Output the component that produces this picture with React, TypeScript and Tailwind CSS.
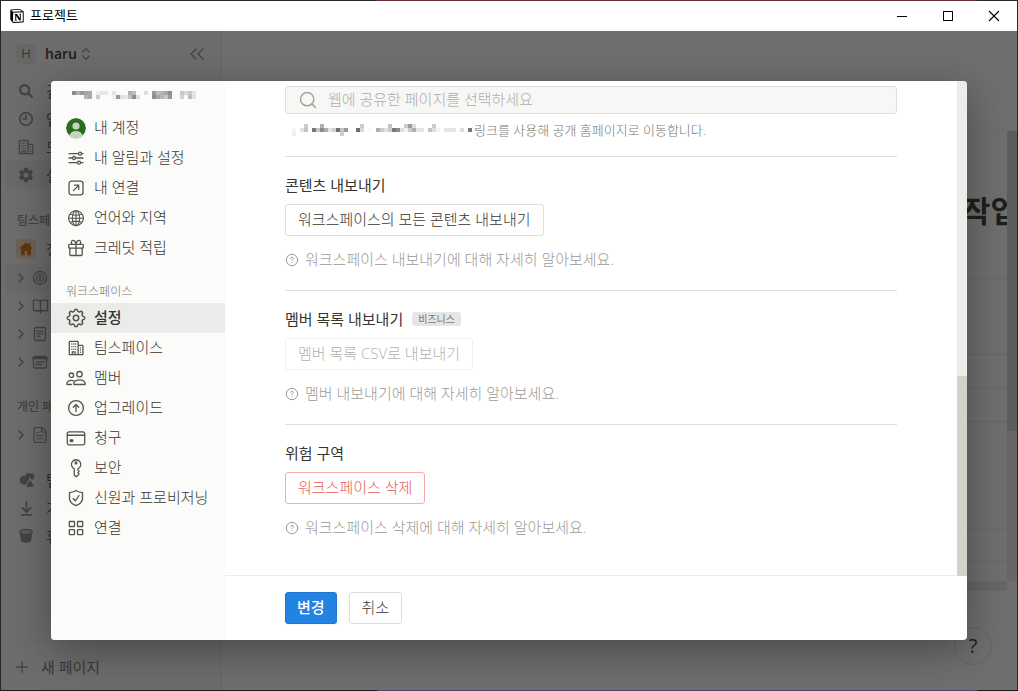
import { useState } from "react";
import type { ReactNode } from "react";
import { ChevronsLeft, ChevronsUpDown, ChevronRight, BookOpen, FileText, Plus, ArrowDownToLine, Search } from "lucide-react";
import { IoSettingsSharp } from "react-icons/io5";
import { FaSearch } from "react-icons/fa";
import { SiNotion } from "react-icons/si";

type Cell = [number, number, string];

// blurred out account address, [column, row, colour] in 4px blocks
const emailCells: Cell[] = [
  [0, 0, "#8c8c8a"], [1, 0, "#aeaeac"], [2, 0, "#9a9a98"], [3, 0, "#a5a5a3"], [4, 0, "#a8a8a6"],
  [3, 1, "#b5b5b3"], [4, 1, "#a8a8a6"], [6, 0, "#eeeeec"], [7, 0, "#e8e8e6"], [8, 0, "#e8e8e6"], [6, 1, "#c8c8c6"],
  [10, 0, "#e6e6e4"], [10, 1, "#eeeeec"], [11, 1, "#999997"], [12, 1, "#dededc"], [13, 1, "#e8e8e6"],
  [14, 0, "#aeaeac"], [15, 0, "#bcbcba"], [14, 1, "#c4c4c2"], [15, 1, "#8f8f8d"], [16, 1, "#dededc"],
  [18, 0, "#dededc"], [20, 0, "#999997"], [20, 1, "#8f8f8d"], [21, 0, "#bcbcba"], [21, 1, "#a5a5a3"],
  [22, 0, "#b5b5b3"], [22, 1, "#b5b5b3"], [23, 0, "#a5a5a3"], [23, 1, "#c8c8c6"], [24, 0, "#8c8c8a"], [24, 1, "#999997"],
  [27, 0, "#c8c8c6"], [27, 1, "#d2d2d0"], [28, 0, "#d8d8d6"], [29, 0, "#c8c8c6"], [29, 1, "#bcbcba"],
  [30, 0, "#e2e2e0"], [30, 1, "#e2e2e0"],
];

const urlCells: Cell[] = [
  [0, 1, "#f5f5f4"], [0, 2, "#f0f0ef"], [2, 1, "#e3e3e2"], [3, 0, "#cdcdcb"], [3, 1, "#c4c4c2"],
  [5, 1, "#777775"], [6, 1, "#c4c4c2"], [7, 0, "#b0b0ae"], [7, 1, "#8c8c8a"], [8, 1, "#aeaeac"],
  [9, 1, "#e3e3e2"], [10, 1, "#d2d2d0"], [11, 1, "#70706e"], [12, 1, "#c4c4c2"], [12, 2, "#cdcdcb"], [13, 1, "#999997"],
  [16, 1, "#70706e"], [17, 0, "#cdcdcb"], [17, 1, "#d8d8d6"], [19, 1, "#f7f7f6"], [21, 1, "#aeaeac"], [22, 1, "#cdcdcb"],
  [23, 1, "#e0e0df"], [24, 0, "#c4c4c2"], [24, 1, "#cdcdcb"], [25, 1, "#777775"], [26, 1, "#8c8c8a"], [27, 1, "#dededc"],
  [28, 0, "#cdcdcb"], [28, 1, "#f0f0ef"], [29, 0, "#999997"], [29, 1, "#cdcdcb"], [30, 0, "#dededc"], [30, 1, "#aeaeac"],
  [31, 1, "#e6e6e4"], [32, 1, "#e6e6e4"], [34, 1, "#c4c4c2"], [35, 0, "#cdcdcb"], [35, 1, "#dededc"], [36, 1, "#f2f2f1"],
  [38, 1, "#e6e6e4"], [39, 1, "#e6e6e4"], [40, 1, "#e6e6e4"], [42, 1, "#dededc"], [44, 1, "#777775"],
];

function Mosaic({ cells, cols, rows }: { cells: Cell[]; cols: number; rows: number }) {
  return (
    <svg width={cols * 4} height={rows * 4} shapeRendering="crispEdges" className="shrink-0" aria-hidden="true">
      {cells.map(([x, y, fill]) => (
        <rect key={`${x}-${y}`} x={x * 4} y={y * 4} width="4" height="4" fill={fill} />
      ))}
    </svg>
  );
}

function Icon({ children }: { children: ReactNode }) {
  return (
    <svg
      width="20"
      height="20"
      viewBox="0 0 20 20"
      fill="none"
      stroke="currentColor"
      strokeWidth="1.3"
      strokeLinecap="round"
      strokeLinejoin="round"
      aria-hidden="true"
    >
      {children}
    </svg>
  );
}

const Avatar = () => (
  <svg width="20" height="20" viewBox="0 0 20 20" className="rounded-full shadow-sm" aria-hidden="true">
    <circle cx="10" cy="10" r="10" fill="#2f6b1f" />
    <circle cx="10" cy="8" r="3.6" fill="#c3d5be" />
    <path d="M3.4 17.5C4.4 14.4 7 13 10 13s5.6 1.4 6.6 4.5A10 10 0 0 1 10 20a10 10 0 0 1-6.6-2.5z" fill="#c3d5be" />
  </svg>
);

const Sliders = () => (
  <Icon>
    <path d="M3 5.7h9.4M15.6 5.7H17M3 10h3.4M9.6 10H17M3 14.7h8.4M14.6 14.7H17" />
    <circle cx="14" cy="5.7" r="1.5" />
    <circle cx="8" cy="10" r="1.5" />
    <circle cx="13" cy="14.7" r="1.5" />
  </Icon>
);

const ArrowBox = () => (
  <Icon>
    <rect x="3" y="3.2" width="14" height="13.6" rx="2.6" />
    <path d="M7.4 12.6l5-5M8.6 7.2h4.1v4.1" />
  </Icon>
);

const Globe = () => (
  <Icon>
    <g strokeWidth="1.1">
      <circle cx="10" cy="10.2" r="7.4" />
      <ellipse cx="10" cy="10.2" rx="3.7" ry="7.4" />
      <path d="M10 2.8v14.8M2.6 10.2h14.8M4.2 6c3.4 1.5 8.2 1.5 11.6 0M4.2 14.4c3.4-1.5 8.2-1.5 11.6 0" />
    </g>
  </Icon>
);

const Gift = () => (
  <Icon>
    <rect x="2.7" y="6.4" width="14.6" height="3.8" rx="1" />
    <path d="M3.8 10.2v6a1.3 1.3 0 0 0 1.3 1.3h9.8a1.3 1.3 0 0 0 1.3-1.3v-6M10 6.4v11.1" />
    <path d="M10 6.2C9.6 3.8 8.4 2.3 6.9 2.3S4.7 5.2 6.2 6.2M10 6.2c.4-2.4 1.6-3.9 3.1-3.9s2.2 2.9.7 3.9" />
  </Icon>
);

// eight rounded teeth, traced in polar steps
const gearPoints = Array.from({ length: 144 }, (_, i) => {
  const angle = (i / 144) * Math.PI * 2;
  const radius = 7.7 + 0.95 * Math.tanh(2 * Math.cos(8 * angle));
  return `${(10 + radius * Math.cos(angle)).toFixed(2)},${(10 + radius * Math.sin(angle)).toFixed(2)}`;
}).join(" ");

const Gear = () => (
  <Icon>
    <polygon points={gearPoints} strokeWidth="1.5" />
    <circle cx="10" cy="10" r="2.7" strokeWidth="1.5" />
  </Icon>
);

const Building = () => (
  <Icon>
    <path d="M3.3 16.6V4.2a.8.8 0 0 1 .8-.8h7.2a.8.8 0 0 1 .8.8v12.4zM12.1 7.3h4a.8.8 0 0 1 .8.8v8.5h-4.8M6.3 16.4v-2.6h2.8v2.6" />
    <path d="M5.8 6h.1M7.7 6h.1M9.6 6h.1M5.8 8.6h.1M7.7 8.6h.1M9.6 8.6h.1M5.8 11.2h.1M7.7 11.2h.1M9.6 11.2h.1M14.5 9.8v.1M14.5 12v.1M14.5 14.2v.1" />
  </Icon>
);

const People = () => (
  <Icon>
    <circle cx="13.5" cy="6.2" r="2.7" />
    <path d="M8.3 16.5c-.5 0-.7-.4-.6-.9.5-2.4 3-3.8 5.8-3.8s5.3 1.4 5.8 3.8c.1.5-.1.9-.6.9z" />
    <circle cx="5.4" cy="7.2" r="2.2" />
    <path d="M5.4 16.5H1.3c-.4 0-.6-.3-.5-.7.4-2 2.400-3.400 4.600-3.400.8 0 1.600.2 2.300.5" />
  </Icon>
);

const ArrowUp = () => (
  <Icon>
    <circle cx="10" cy="10" r="7.4" />
    <path d="M10 13.500V6.800M7.300 9.200L10 6.500l2.700 2.700" />
  </Icon>
);

const Card = () => (
  <Icon>
    <rect x="1.3" y="3.8" width="17.4" height="13" rx="1.8" />
    <path d="M1.3 7.3h17.4" strokeWidth="1.6" />
    <rect x="4.200" y="11.800" width="2.600" height="1.800" rx=".5" fill="currentColor" />
  </Icon>
);

const Key = () => (
  <Icon>
    <path d="M8.3 10.8a4.7 4.7 0 1 1 3.600 0v1.300l1.200 1.200-1.200 1.300 1.200 1.300-1.200 1.300-1.600 1.600-2-1.600z" />
    <circle cx="10" cy="4.9" r=".9" />
  </Icon>
);

const Shield = () => (
  <Icon>
    <path d="M10 2.5c2 1.3 4.200 2 6.500 2.200v5.500c0 3.500-2.700 6-6.500 7.500-3.800-1.500-6.500-4-6.500-7.500V4.700C5.800 4.500 8 3.800 10 2.500z" />
    <path d="M7.200 10.500l2.100 2.300 3.700-5.300" />
  </Icon>
);

const Grid = () => (
  <Icon>
    <rect x="3.300" y="3.500" width="5.200" height="5" rx=".6" />
    <rect x="11.500" y="3.500" width="5.200" height="5" rx=".6" />
    <rect x="3.300" y="11.700" width="5.200" height="5" rx=".6" />
    <rect x="11.500" y="11.700" width="5.200" height="5" rx=".6" />
  </Icon>
);

const Target = () => (
  <Icon>
    <circle cx="10" cy="10" r="6.500" />
    <circle cx="10" cy="10" r="3.600" />
    <circle cx="10" cy="10" r="1" fill="currentColor" />
  </Icon>
);

const Clock = () => (
  <Icon>
    <g strokeWidth="1.700">
      <circle cx="10" cy="10" r="6.300" />
      <path d="M10 6.500V10H7" />
    </g>
  </Icon>
);

const Note = () => (
  <Icon>
    <rect x="4.500" y="3.500" width="11" height="13" rx="1.500" />
    <path d="M7 7.200h6M7 9.700h6M7 12.200h3" />
  </Icon>
);

const Board = () => (
  <Icon>
    <rect x="3.500" y="4.500" width="13" height="11.500" rx="1.500" />
    <path d="M3.500 6h13" strokeWidth="2.600" />
    <path d="M6 9.800h8M6 12.500h6" />
  </Icon>
);

const House = () => (
  <svg width="20" height="20" viewBox="0 0 20 20" className="rounded-[3px] bg-[#fadec9] text-[#d9730d]" fill="currentColor" aria-hidden="true">
    <path d="M10 3.200L3.200 9.600h1.900v6.600h3.500v-4.300h2.800v4.300h3.500V9.600h1.900l-2.300-2.200V4h-1.800v1.700z" />
  </svg>
);

const Shapes = () => (
  <svg width="20" height="20" viewBox="0 0 20 20" fill="currentColor" aria-hidden="true">
    <path d="M10.500 3.200l7.800.6-.6 5.600-2.200 0-1.600-2.400L11 13.600A4.400 4.400 0 1 1 9.300 6z" />
    <path d="M14.200 9.800l4 6.900h-8z" />
  </svg>
);

const Trash = () => (
  <svg width="20" height="20" viewBox="0 0 20 20" aria-hidden="true">
    <path d="M3.600 5.500h12.800l-1.300 9.300c-.2 1.300-2.300 2-5.100 2s-4.900-.7-5.100-2z" fill="currentColor" />
    <ellipse cx="10" cy="5.900" rx="6.200" ry="2.600" fill="#d0d0ce" stroke="currentColor" strokeWidth="1.300" />
  </svg>
);

const accountItems = [
  { label: "내 계정", icon: <Avatar /> },
  { label: "내 알림과 설정", icon: <Sliders /> },
  { label: "내 연결", icon: <ArrowBox /> },
  { label: "언어와 지역", icon: <Globe /> },
  { label: "크레딧 적립", icon: <Gift /> },
];

const workspaceItems = [
  { label: "설정", icon: <Gear /> },
  { label: "팀스페이스", icon: <Building /> },
  { label: "멤버", icon: <People /> },
  { label: "업그레이드", icon: <ArrowUp /> },
  { label: "청구", icon: <Card /> },
  { label: "보안", icon: <Key /> },
  { label: "신원과 프로비저닝", icon: <Shield /> },
  { label: "연결", icon: <Grid /> },
];

function MenuItem({ label, icon, active, onClick }: { label: string; icon: ReactNode; active: boolean; onClick: () => void }) {
  return (
    <button
      type="button"
      onClick={onClick}
      className={`flex h-[30px] w-full items-center gap-2 pl-[15px] text-left text-[15px] leading-5 whitespace-nowrap text-[#37352f] ${active ? "bg-[#ebebea] font-medium" : ""}`}
    >
      <span className="flex w-5 shrink-0 justify-center text-[#55534e]">{icon}</span>
      <span className="pb-0.5">{label}</span>
    </button>
  );
}

function NavRow({ label, icon, active }: { label: string; icon: ReactNode; active?: boolean }) {
  return (
    <a
      href="#"
      className={`mx-1 flex h-7 items-center gap-[10px] rounded-[3px] pl-[11px] text-[15px] leading-5 whitespace-nowrap text-[#5f5e5b] ${active ? "bg-[#efefee]" : ""}`}
    >
      <span className="flex w-5 shrink-0 justify-center text-[#91918e]">{icon}</span>
      {label}
    </a>
  );
}

function TreeRow({ icon, active }: { icon: ReactNode; active?: boolean }) {
  return (
    <div className={`mx-1 flex h-7 items-center gap-px rounded-[3px] pl-2 text-[#91918e] ${active ? "bg-[#efefee]" : ""}`}>
      <ChevronRight size={16} strokeWidth={2.2} className="shrink-0" />
      <span className="flex w-5 shrink-0 justify-center">{icon}</span>
    </div>
  );
}

function Sidebar() {
  return (
    <aside className="flex w-[221px] shrink-0 flex-col border-r border-[#eeeeed] bg-[#fbfbfa]">
      <div className="flex h-[46px] items-center pr-3 pl-[15px] text-[#37352f]">
        <span className="flex size-5 items-center justify-center rounded-[3px] bg-[#ecebea] text-[13px] font-medium text-[#787774]">H</span>
        <span className="ml-[9px] text-[14px] leading-5 font-semibold">haru</span>
        <ChevronsUpDown size={16} strokeWidth={1.8} className="ml-px text-[#91918e]" />
        <ChevronsLeft size={24} strokeWidth={1.4} className="ml-auto text-[#91918e]" />
      </div>
      <NavRow label="검색" icon={<FaSearch size={14} />} />
      <NavRow label="업데이트" icon={<Clock />} />
      <NavRow label="모든 팀스페이스" icon={<Building />} />
      <NavRow label="설정과 멤버" icon={<IoSettingsSharp size={16} />} active />
      <p className="mt-[18px] h-7 pl-4 text-[12px] leading-7 font-medium text-[#91918e]">팀스페이스</p>
      <NavRow label="전체" icon={<House />} />
      <div className="mt-px">
        <TreeRow icon={<Target />} active />
        <TreeRow icon={<BookOpen size={17} strokeWidth={1.8} />} />
        <TreeRow icon={<Note />} />
        <TreeRow icon={<Board />} />
      </div>
      <p className="mt-[17px] h-7 pl-4 text-[12px] leading-7 font-medium text-[#91918e]">개인 페이지</p>
      <TreeRow icon={<FileText size={18} strokeWidth={1.6} />} />
      <div className="mt-[17px]">
        <NavRow label="템플릿" icon={<Shapes />} />
        <NavRow label="가져오기" icon={<ArrowDownToLine size={17} strokeWidth={2.4} />} />
        <NavRow label="휴지통" icon={<Trash />} />
      </div>
      <button type="button" className="mt-auto flex h-12 items-center gap-[10px] border-t border-[#eeeeed] pl-3 text-[15px] leading-5 text-[#787774]">
        <Plus size={18} strokeWidth={1.8} className="text-[#91918e]" />
        새 페이지
      </button>
    </aside>
  );
}

function PageBehind() {
  return (
    <main className="flex min-w-0 flex-1 flex-col pt-[99px]">
      <div className="flex h-[461px] border-t border-[#f3f3f2]">
        <div className="min-w-0 flex-1 overflow-hidden">
          <h1 className="h-[148px] w-[calc(100%+11px)] border-b border-[#e9e9e7] pt-[60px] text-right text-[30px] leading-10 font-semibold whitespace-nowrap text-[#37352f]">
            작업
          </h1>
          <div className="h-[76px] border-b border-[#e9e9e7]" />
          <div className="h-[34px] border-b border-[#e9e9e7]" />
          <div className="h-[33px] border-b border-[#e9e9e7]" />
          <div className="h-[108px] border-b border-[#e9e9e7]" />
          <div className="h-[32px] border-b border-[#e9e9e7]" />
          <div className="h-[19px] bg-white" />
          <div className="h-[10px] bg-[#edece9]" />
        </div>
        <div className="h-[450px] w-[10px] bg-[#edece9]">
          <div className="h-[300px] bg-[#d3d1cb]" />
        </div>
      </div>
    </main>
  );
}

function HelpLink({ children }: { children: ReactNode }) {
  return (
    <a href="#" className="mt-[14px] flex h-5 items-center gap-[6px] text-[15px] leading-5 whitespace-nowrap text-[#9b9a97]">
      <svg width="14" height="14" viewBox="0 0 14 14" fill="none" stroke="currentColor" strokeLinecap="round" aria-hidden="true">
        <circle cx="7" cy="7" r="5.700" />
        <path d="M5.600 5.700c0-.9.600-1.400 1.400-1.400s1.400.5 1.400 1.200c0 1-1.400 1-1.400 2.100M7 9.500v.1" />
      </svg>
      <span className="pb-0.5">{children}</span>
    </a>
  );
}

function Section({ title, badge, help, children }: { title: string; badge?: string; help: string; children: ReactNode }) {
  return (
    <section className="flex flex-col items-start border-t border-[#dfdfde] pt-[18px] pb-5">
      <h2 className="mb-[9px] flex items-center gap-[9px] text-[15px] leading-5 font-normal text-[#37352f]">
        {title}
        {badge && <span className="rounded-[3px] bg-[#e6e6e4] px-[6px] text-[10px] leading-[14px] text-[#787774]">{badge}</span>}
      </h2>
      {children}
      <HelpLink>{help}</HelpLink>
    </section>
  );
}

const outlineButton = "h-8 rounded-[3px] border border-[#dededd] px-3 pb-0.5 text-[15px] leading-5 whitespace-nowrap text-[#37352f]";

function SettingsDialog() {
  const [selected, setSelected] = useState("설정");

  return (
    <div role="dialog" aria-label="설정" className="flex w-full overflow-hidden rounded-[4px] bg-white font-light shadow-[0_10px_40px_rgba(15,15,15,0.4)]">
      <nav className="w-[174px] shrink-0 bg-[#fbfbfa]">
        <div className="h-8 pt-[10px] pl-[21px]">
          <Mosaic cells={emailCells} cols={31} rows={2} />
        </div>
        {accountItems.map((item) => (
          <MenuItem key={item.label} {...item} active={selected === item.label} onClick={() => setSelected(item.label)} />
        ))}
        <p className="h-10 pt-[19px] pl-[15px] text-[12px] leading-5 text-[#787774]">워크스페이스</p>
        {workspaceItems.map((item) => (
          <MenuItem key={item.label} {...item} active={selected === item.label} onClick={() => setSelected(item.label)} />
        ))}
      </nav>

      <div className="flex min-w-0 flex-1 flex-col">
        <div className="flex flex-1">
          <div className="min-w-0 flex-1 border-b border-[#ededec] px-[60px] pt-[5px]">
            <label className="flex h-7 items-center gap-[10px] rounded-[3px] border border-[#dededd] bg-[#f7f7f5] pl-3">
              <Search size={20} strokeWidth={1.8} className="shrink-0 text-[#a5a4a1]" />
              <input
                type="text"
                aria-label="공개 홈페이지"
                placeholder="웹에 공유한 페이지를 선택하세요"
                className="w-full bg-transparent pb-0.5 text-[15px] leading-5 outline-none placeholder:text-[#aeadab]"
              />
            </label>
            <p className="mt-[6px] mb-4 flex h-5 items-center gap-0.5 pl-[7px] text-[13px] leading-5 whitespace-nowrap text-[#787774]">
              <Mosaic cells={urlCells} cols={45} rows={3} />
              링크를 사용해 공개 홈페이지로 이동합니다.
            </p>
            <Section title="콘텐츠 내보내기" help="워크스페이스 내보내기에 대해 자세히 알아보세요.">
              <button type="button" className={outlineButton}>
                워크스페이스의 모든 콘텐츠 내보내기
              </button>
            </Section>
            <Section title="멤버 목록 내보내기" badge="비즈니스" help="멤버 내보내기에 대해 자세히 알아보세요.">
              <button type="button" disabled className={`${outlineButton} opacity-40`}>
                멤버 목록 CSV로 내보내기
              </button>
            </Section>
            <Section title="위험 구역" help="워크스페이스 삭제에 대해 자세히 알아보세요.">
              <button type="button" className="h-8 rounded-[3px] border border-[#f5abab] px-3 pb-0.5 text-[15px] leading-5 whitespace-nowrap text-[#eb5757]">
                워크스페이스 삭제
              </button>
            </Section>
          </div>
          <div className="flex w-[10px] shrink-0 flex-col justify-end bg-[#edece9]">
            <div className="h-[200px] bg-[#d3d1cb]" />
          </div>
        </div>
        <div className="flex gap-3 px-[60px] py-4">
          <button type="button" className="h-8 rounded-[3px] border border-[#1f76cc] bg-[#2383e2] px-[11px] pb-0.5 text-[15px] leading-5 font-medium text-white shadow-xs">
            변경
          </button>
          <button type="button" className={outlineButton}>
            취소
          </button>
        </div>
      </div>
    </div>
  );
}

export default function App() {
  return (
    <div className="flex min-h-screen flex-col font-['Open_Sans','Noto_Sans_CJK_KR',sans-serif]">
      <div className="flex h-px bg-[#2a2a2e]">
        <div className="ml-[37%] w-[59%] bg-[#6b3034]" />
      </div>
      <div className="flex flex-1 flex-col border-x border-[#26262a]">
        <header className="flex h-[30px] items-center bg-white pl-[9px] text-black">
          <SiNotion size={14} />
          <h1 className="ml-[6px] pb-0.5 text-[13px] leading-5">프로젝트</h1>
          <div className="ml-auto flex">
            <button type="button" aria-label="최소화" className="flex h-[30px] w-[46px] items-center justify-center">
              <svg width="12" height="12" viewBox="0 0 12 12" stroke="currentColor">
                <path d="M1 6.5h10" />
              </svg>
            </button>
            <button type="button" aria-label="최대화" className="flex h-[30px] w-[46px] items-center justify-center">
              <svg width="12" height="12" viewBox="0 0 12 12" fill="none" stroke="currentColor">
                <rect x="1.5" y="1.5" width="9" height="9" />
              </svg>
            </button>
            <button type="button" aria-label="닫기" className="flex h-[30px] w-[46px] items-center justify-center">
              <svg width="12" height="12" viewBox="0 0 12 12" stroke="currentColor" strokeWidth="1.1">
                <path d="M1 1l10 10M11 1L1 11" />
              </svg>
            </button>
          </div>
        </header>

        <div className="relative flex flex-1 bg-white">
          <Sidebar />
          <PageBehind />
          <button
            type="button"
            aria-label="도움말"
            className="absolute right-[25px] bottom-[25px] size-[38px] rounded-full border border-[#e3e3e2] bg-white text-[20px] leading-5 text-[#37352f]"
          >
            ?
          </button>
          <div className="absolute inset-0 flex bg-[#0f0f0f]/60 p-[50px]">
            <SettingsDialog />
          </div>
        </div>
      </div>
      <div className="flex h-px bg-[#1c1a1e]">
        <div className="ml-[37%] w-[59%] bg-[#54456b]" />
      </div>
    </div>
  );
}
